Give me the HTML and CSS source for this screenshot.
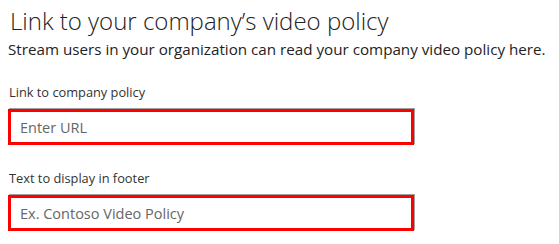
FILE: index.html
```html
<!DOCTYPE html>
<html lang="en">
    <head>
        <meta charset="UTF-8">
        <title>Company video policy</title>
        <link rel="stylesheet" href="styles.css">
    </head>
    <body>
        <div class="policy">
            <h2 class="policy-title">Link to your company’s video policy</h2>
            <p class="policy-desc">Stream users in your organization can read your company video policy here.</p>

            <div class="field">
                <label class="field-label" for="policyUrl">Link to company policy</label>
                <input class="field-input" type="text" id="policyUrl" placeholder="Enter URL">
            </div>

            <div class="field">
                <label class="field-label" for="footerText">Text to display in footer</label>
                <input class="field-input" type="text" id="footerText" placeholder="Ex. Contoso Video Policy">
            </div>
        </div>
    </body>
</html>
```

FILE: styles.css
```css
body {
    font-family: 'Open Sans', 'Noto Sans', sans-serif;
    margin: 0;
    padding: 0 8px;
    background-color: #ffffff;
    color: #333;
}
.policy {
    width: 406px;
}
.policy-title {
    font-size: 24px;
    font-weight: 300;
    margin: 0;
    padding: 5px 0 0 2px;
    line-height: 32px;
    white-space: nowrap;
    color: #222;
}
.policy-desc {
    font-size: 15.2px;
    margin: 1px 0 0;
    line-height: 22px;
    white-space: nowrap;
    color: #222;
}
.field {
    display: flex;
    flex-direction: column;
    margin-top: 23px;
}
.field + .field {
    margin-top: 24px;
}
.field-label {
    font-size: 12.8px;
    line-height: 18px;
    padding-left: 1px;
    color: #333;
}
.field-input {
    margin-top: 8px;
    height: 36px;
    box-sizing: border-box;
    border: 3px solid #ff0000;
    box-shadow: 1px -1px 0 #a0a0a0;
    padding: 0 10px 0 9px;
    font-family: inherit;
    font-size: 14.5px;
    color: #333;
    outline: none;
}
.field-input::placeholder {
    color: #666;
}
```
